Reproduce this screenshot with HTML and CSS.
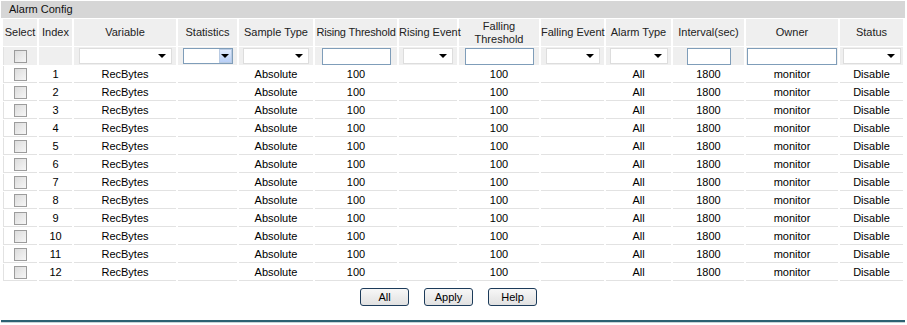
FILE: index.html
```html
<!DOCTYPE html>
<html lang="en">
<head>
  <meta charset="UTF-8">
  <title>Alarm Config</title>
  <link rel="stylesheet" href="styles.css">
</head>
<body>
  <form id="alarmform" onsubmit="return false;">
    <div class="panel">
      <div class="paneltitle">Alarm Config</div>
      <table class="grid">
        <colgroup>
          <col class="c-select"><col class="c-index"><col class="c-variable"><col class="c-stat">
          <col class="c-sample"><col class="c-rising"><col class="c-revent"><col class="c-falling">
          <col class="c-fevent"><col class="c-atype"><col class="c-interval"><col class="c-owner">
          <col class="c-status">
        </colgroup>
        <thead>
          <tr class="headrow">
            <th>Select</th><th>Index</th><th>Variable</th><th>Statistics</th><th>Sample Type</th>
            <th class="tight">Rising Threshold</th><th>Rising Event</th><th class="wrap">Falling Threshold</th><th>Falling Event</th>
            <th>Alarm Type</th><th>Interval(sec)</th><th>Owner</th><th>Status</th>
          </tr>
          <tr class="filterrow">
            <td><input type="checkbox" class="chk"></td>
            <td></td>
            <td><span class="dropdown w93"><select></select></span></td>
            <td><span class="dropdown focus w50"><select></select></span></td>
            <td><span class="dropdown w66"><select></select></span></td>
            <td><input type="text" class="txt w69"></td>
            <td><span class="dropdown w50"><select></select></span></td>
            <td><input type="text" class="txt w69"></td>
            <td><span class="dropdown w54"><select></select></span></td>
            <td><span class="dropdown w58"><select></select></span></td>
            <td><input type="text" class="txt w44"></td>
            <td><input type="text" class="txt w90"></td>
            <td><span class="dropdown w58"><select></select></span></td>
          </tr>
        </thead>
        <tbody>
          <tr><td><input type="checkbox" class="chk"></td><td>1</td><td>RecBytes</td><td></td><td>Absolute</td><td>100</td><td></td><td>100</td><td></td><td>All</td><td>1800</td><td>monitor</td><td>Disable</td></tr>
          <tr><td><input type="checkbox" class="chk"></td><td>2</td><td>RecBytes</td><td></td><td>Absolute</td><td>100</td><td></td><td>100</td><td></td><td>All</td><td>1800</td><td>monitor</td><td>Disable</td></tr>
          <tr><td><input type="checkbox" class="chk"></td><td>3</td><td>RecBytes</td><td></td><td>Absolute</td><td>100</td><td></td><td>100</td><td></td><td>All</td><td>1800</td><td>monitor</td><td>Disable</td></tr>
          <tr><td><input type="checkbox" class="chk"></td><td>4</td><td>RecBytes</td><td></td><td>Absolute</td><td>100</td><td></td><td>100</td><td></td><td>All</td><td>1800</td><td>monitor</td><td>Disable</td></tr>
          <tr><td><input type="checkbox" class="chk"></td><td>5</td><td>RecBytes</td><td></td><td>Absolute</td><td>100</td><td></td><td>100</td><td></td><td>All</td><td>1800</td><td>monitor</td><td>Disable</td></tr>
          <tr><td><input type="checkbox" class="chk"></td><td>6</td><td>RecBytes</td><td></td><td>Absolute</td><td>100</td><td></td><td>100</td><td></td><td>All</td><td>1800</td><td>monitor</td><td>Disable</td></tr>
          <tr><td><input type="checkbox" class="chk"></td><td>7</td><td>RecBytes</td><td></td><td>Absolute</td><td>100</td><td></td><td>100</td><td></td><td>All</td><td>1800</td><td>monitor</td><td>Disable</td></tr>
          <tr><td><input type="checkbox" class="chk"></td><td>8</td><td>RecBytes</td><td></td><td>Absolute</td><td>100</td><td></td><td>100</td><td></td><td>All</td><td>1800</td><td>monitor</td><td>Disable</td></tr>
          <tr><td><input type="checkbox" class="chk"></td><td>9</td><td>RecBytes</td><td></td><td>Absolute</td><td>100</td><td></td><td>100</td><td></td><td>All</td><td>1800</td><td>monitor</td><td>Disable</td></tr>
          <tr><td><input type="checkbox" class="chk"></td><td>10</td><td>RecBytes</td><td></td><td>Absolute</td><td>100</td><td></td><td>100</td><td></td><td>All</td><td>1800</td><td>monitor</td><td>Disable</td></tr>
          <tr><td><input type="checkbox" class="chk"></td><td>11</td><td>RecBytes</td><td></td><td>Absolute</td><td>100</td><td></td><td>100</td><td></td><td>All</td><td>1800</td><td>monitor</td><td>Disable</td></tr>
          <tr><td><input type="checkbox" class="chk"></td><td>12</td><td>RecBytes</td><td></td><td>Absolute</td><td>100</td><td></td><td>100</td><td></td><td>All</td><td>1800</td><td>monitor</td><td>Disable</td></tr>
        </tbody>
      </table>
      <div class="buttons">
        <input type="button" class="btn" value="All">
        <input type="button" class="btn" value="Apply">
        <input type="button" class="btn" value="Help">
      </div>
      <div class="bottomline"></div>
    </div>
  </form>
</body>
</html>
```

FILE: styles.css
```css
body {
  margin: 0;
  font-family: "Liberation Sans", Arial, sans-serif;
  font-size: 11px;
  color: #000;
  background: #fff;
}

.panel {
  padding-top: 1px;
  width: 907px;
}

.paneltitle {
  margin: 0 2px 0 1px;
  height: 17px;
  line-height: 17px;
  padding-left: 8px;
  background: #d6d6d6;
  color: #111;
}

.grid {
  table-layout: fixed;
  width: 904px;
  margin-left: 1px;
  border-collapse: separate;
  border-spacing: 2px 1px;
}

.c-select { width: 34px; }
.c-index { width: 33px; }
.c-variable { width: 102px; }
.c-stat { width: 59px; }
.c-sample { width: 74px; }
.c-rising { width: 82px; }
.c-revent { width: 58px; }
.c-falling { width: 80px; }
.c-fevent { width: 63px; }
.c-atype { width: 65px; }
.c-interval { width: 71px; }
.c-owner { width: 92px; }
.c-status { width: 63px; }

.grid th,
.grid td {
  padding: 0;
  text-align: center;
  vertical-align: middle;
  font-weight: normal;
}

.headrow th {
  height: 27px;
  background: #efefef;
  color: #222;
  line-height: 13px;
  white-space: nowrap;
  overflow: visible;
}

.headrow th.tight {
  letter-spacing: -0.2px;
}

.headrow th.wrap {
  white-space: normal;
}

.filterrow td {
  height: 18px;
  background: #efefef;
}

.grid tbody td {
  height: 16px;
  border-bottom: 1px solid #e2e2e2;
}

.grid tbody td:first-child,
.filterrow td:first-child {
  border-left: 1px solid #e2e2e2;
}

.chk {
  -webkit-appearance: none;
  appearance: none;
  display: block;
  margin: 0 auto;
  width: 13px;
  height: 13px;
  border: 1px solid #9c9c9c;
  background: linear-gradient(135deg, #dcdcdc, #f6f6f6);
}

.dropdown {
  position: relative;
  display: block;
  margin: 0 auto;
  height: 16px;
  box-sizing: border-box;
  border: 1px solid #dddddd;
  background: #fff;
}

.dropdown select {
  -webkit-appearance: none;
  appearance: none;
  display: block;
  width: 100%;
  height: 14px;
  border: 0;
  background: transparent;
}

.dropdown::after {
  content: "";
  position: absolute;
  right: 5px;
  top: 5px;
  border-left: 4px solid transparent;
  border-right: 4px solid transparent;
  border-top: 4px solid #000;
}

.dropdown.focus {
  border-color: #7f9db9;
}

.dropdown.focus::before {
  content: "";
  position: absolute;
  right: 0;
  top: 0;
  width: 13px;
  height: 14px;
  box-sizing: border-box;
  border: 1px solid #b9cbe3;
  background: linear-gradient(#e2ecfd, #b8cff7);
}

.dropdown.focus::after {
  right: 3px;
}

.txt {
  display: block;
  margin: 0 auto;
  height: 17px;
  box-sizing: border-box;
  border: 1px solid #7f9db9;
  padding: 0 2px;
  background: #fff;
  font: inherit;
}

.w44 { width: 44px; }
.w50 { width: 50px; }
.w54 { width: 54px; }
.w58 { width: 58px; }
.w66 { width: 66px; }
.w69 { width: 69px; }
.w90 { width: 90px; }
.w93 { width: 93px; }

.buttons {
  display: flex;
  justify-content: center;
  gap: 15px;
  margin-top: 6px;
  padding-right: 10px;
}

.btn {
  width: 49px;
  height: 18px;
  padding: 0;
  border: 1px solid #1c3b5a;
  border-radius: 3px;
  background: linear-gradient(#f7f7f7, #e1e1e1);
  font-family: "Liberation Sans", Arial, sans-serif;
  font-size: 11px;
  color: #000;
}

.bottomline {
  margin: 14px 2px 0 1px;
  height: 2px;
  background: #2c6172;
  border-bottom: 1px solid #c8d3d7;
}
```
